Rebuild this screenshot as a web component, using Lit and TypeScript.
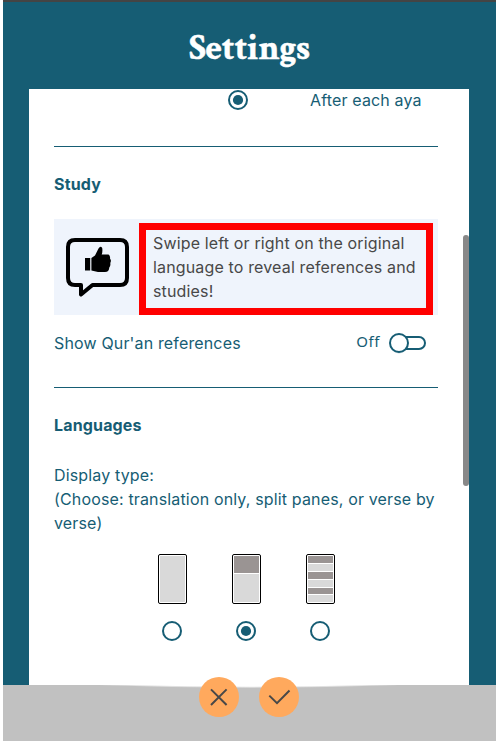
import { LitElement, html, css, svg } from "lit";
import { customElement, property } from "lit/decorators.js";

@customElement("radio-dot")
class RadioDot extends LitElement {
  @property({ type: Boolean }) checked = false;
  static styles = css`
    :host { display: block; width: 20px; height: 20px; }
    svg { display: block; }
  `;
  render() {
    return html`<svg width="20" height="20" viewBox="0 0 20 20">
      <circle cx="10" cy="10" r="9" fill="#fff" stroke="#165d74" stroke-width="2" />
      ${this.checked ? svg`<circle cx="10" cy="10" r="5.1" fill="#165d74" />` : null}
    </svg>`;
  }
}

@customElement("layout-thumb")
class LayoutThumb extends LitElement {
  @property({ attribute: false }) bands: [number, boolean][] = [];
  static styles = css`
    :host {
      box-sizing: border-box; width: 29px; height: 50px; padding: 1px;
      border: 1px solid #000; border-radius: 2px;
      display: flex; flex-direction: column; gap: 1px; background: #fff;
    }
    .band { background: #d9d9d9; }
    .dark { background: #9a9493; }
  `;
  render() {
    return this.bands.map(
      ([h, dark]) => html`<div class="band ${dark ? "dark" : ""}" style="height:${h}px"></div>`
    );
  }
}

@customElement("app-root")
class AppRoot extends LitElement {
  static styles = css`
    :host {
      display: block; position: relative; box-sizing: border-box;
      width: 496px; height: 741px; padding-left: 3px; overflow: hidden;
      background: #fff; color: #165d74;
      font: 400 16px/24px Inter, "Liberation Sans", sans-serif;
      letter-spacing: 0.152px;
    }
    .screen {
      box-sizing: border-box; height: 741px; display: flex; flex-direction: column;
      background: #165d74; border-top: 2px solid #444;
    }
    header { height: 87px; flex: none; display: flex; justify-content: center; }
    h1 {
      margin: 25px 0 0; color: #fff; white-space: nowrap;
      font: 700 36px/44px "Crimson Text", "Liberation Serif", serif;
      letter-spacing: -0.2px; -webkit-text-stroke: 0.5px #fff;
    }
    .panel {
      position: relative; box-sizing: border-box; width: 440px; height: 596px; flex: none;
      margin-left: 26px; padding: 0 31px 0 25px; background: #fff; overflow: hidden;
    }
    .thumb {
      position: absolute; right: 0; top: 146px; width: 6px; height: 251px;
      border-radius: 3px; background: #888;
    }
    .repeat { box-sizing: border-box; display: flex; height: 57px; padding: 1px 0 0 174px; }
    .repeat span { margin: -2px 0 0 62px; }
    hr { margin: 0; border: 0; height: 1px; background: #165d74; }
    h2 { margin: 0; font-size: 16px; line-height: 24px; font-weight: 700; }
    .study { padding-top: 25px; }
    .tip {
      display: flex; height: 96px; margin-top: 23px; background: #eff4fc; color: #484848;
    }
    .tip svg { flex: none; margin: 16px 0 0 10px; }
    .marked {
      box-sizing: border-box; width: 294px; height: 92px; margin: 4px 0 0 9px;
      border: 7px solid #f00; padding: 1px 0 0 7px; white-space: nowrap;
    }
    .setting { display: flex; height: 72px; padding-top: 16px; box-sizing: border-box; }
    .off {
      margin: -2px 0 0 auto; font: 400 15px/24px "Noto Sans", sans-serif;
      letter-spacing: 0.6px;
    }
    .toggle { margin: 1px 11px 0 7px; }
    .languages { padding-top: 25px; }
    .languages p { margin: 26px 0 0; white-space: nowrap; }
    .choices { display: flex; justify-content: center; gap: 45px; margin: 19px 0 0 1px; }
    .choice { display: flex; flex-direction: column; align-items: flex-start; gap: 17px; }
    .choice radio-dot { margin-left: 4px; }
    footer {
      position: relative; flex: 1; display: flex; justify-content: center;
      gap: 20px; background: #c1c1c1;
    }
    .curve { position: absolute; left: 96px; top: 0; }
    .action {
      position: relative; width: 40px; height: 40px; margin: -8px 0 0; padding: 0;
      border: 0; border-radius: 50%; background: #ffa95d; left: -.5px;
    }
    .action svg { display: block; }
  `;

  render() {
    return html`
      <div class="screen">
        <header><h1>Settings</h1></header>
        <main class="panel">
          <div class="repeat"><radio-dot checked></radio-dot><span>After each aya</span></div>
          <hr />
          <section class="study">
            <h2>Study</h2>
            <div class="tip">
              <svg width="66" height="64" viewBox="0 0 66 64">
                <path d="M11 5H56Q63 5 63 12V43Q63 50 56 50H28.5L17 59.5V50H11Q4 50 4 43V12Q4 5 11 5Z"
                  fill="none" stroke="#000" stroke-width="4" stroke-linejoin="round" />
                <path d="M21 23h5.2v12.5h-5.2zM27.4 23L31 20.5L34.5 13.5Q36.5 10.2 38.2 13Q38.8 16.5 37.7 19.5H44.5Q46.5 20.8 46 23.5Q47.7 25.5 46.3 28Q46.8 30.8 45.3 32.5Q45 37 41 37H34L27.4 35.5Z" />
              </svg>
              <div class="marked">
                Swipe left or right on the original<br />
                language to reveal references and<br />
                studies!
              </div>
            </div>
            <div class="setting">
              <span>Show Qur'an references</span>
              <span class="off">Off</span>
              <svg class="toggle" width="40" height="24" viewBox="0 0 40 24">
                <rect x="7" y="5" width="31" height="12" rx="6" fill="#fff" stroke="#165d74" stroke-width="2" />
                <circle cx="12" cy="12.5" r="9" fill="#165d74" opacity=".25" />
                <circle cx="12" cy="11" r="9" fill="#fff" stroke="#165d74" stroke-width="2" />
              </svg>
            </div>
          </section>
          <hr />
          <section class="languages">
            <h2>Languages</h2>
            <p>
              Display type:<br />
              (Choose: translation only, split panes, or verse by<br />
              verse)
            </p>
            <div class="choices">
              <div class="choice"><layout-thumb .bands=${[[46, false]]}></layout-thumb><radio-dot></radio-dot></div>
              <div class="choice"><layout-thumb .bands=${[[17, true], [28, false]]}></layout-thumb><radio-dot checked></radio-dot></div>
              <div class="choice"><layout-thumb .bands=${[[7, true], [7, false], [7, true], [7, false], [6, true], [7, false]]}></layout-thumb><radio-dot></radio-dot></div>
            </div>
          </section>
          <div class="thumb"></div>
        </main>
        <footer>
          <svg class="curve" width="300" height="4" viewBox="0 0 300 4">
            <path d="M0 0Q150 5.5 300 0Z" fill="#e0e0e0" />
            <path d="M30 0Q150 3.5 270 0Z" fill="#fff" />
          </svg>
          <button class="action" aria-label="Cancel">
            <svg width="40" height="40" viewBox="0 0 40 40" fill="none" stroke="#484848" stroke-width="2"><path d="M12 12.4L27.6 28M27.6 12.4L12 28" /></svg>
          </button>
          <button class="action" aria-label="Confirm">
            <svg width="40" height="40" viewBox="0 0 40 40" fill="none" stroke="#484848" stroke-width="2"><path d="M10.3 18.6L18 26.2L30.5 13.5" /></svg>
          </button>
        </footer>
      </div>
    `;
  }
}
